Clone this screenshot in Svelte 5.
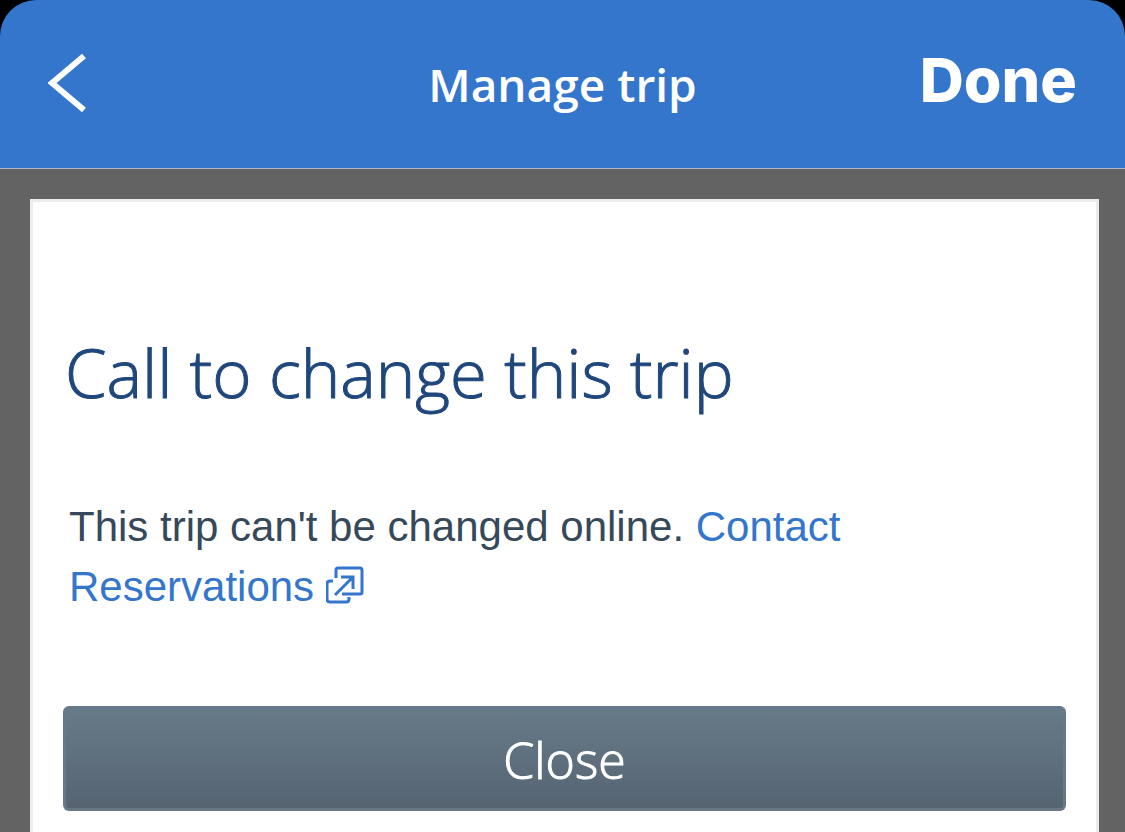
<script>
	let open = true;
	function close() {
		open = false;
	}
</script>

<header>
	<button class="back" aria-label="Back">
		<svg width="40" height="60" viewBox="0 0 40 60" fill="none" stroke="#fff" stroke-width="6">
			<path d="M36 3 L4 30 L36 57" />
		</svg>
	</button>
	<h1>Manage trip</h1>
	<button class="done">Done</button>
</header>

<main>
	{#if open}
		<section class="card">
			<h2>Call to change this trip</h2>
			<p>
				This trip can't be changed online.
				<a href="#reservations">Contact Reservations
					<svg width="38" height="38" viewBox="0 0 38 38" fill="none" stroke="currentColor" stroke-width="3" aria-hidden="true">
						<path d="M10 12 V4 Q10 2 12 2 H34 Q36 2 36 4 V26 Q36 28 34 28 H16" />
						<path d="M7 15 H4 Q1 15 1 18 V33 Q1 36 4 36 H20 Q23 36 23 33 V31" />
						<path d="M9 29 L27 11 M15 11 H27 V23" />
					</svg>
				</a>
			</p>
			<button class="close" on:click={close}>Close</button>
		</section>
	{/if}
</main>

<style>
	:global(body) {
		margin: 0;
		background: #000;
	}

	:global(html) {
		background: #000;
	}

	button {
		border: none;
		background: none;
		padding: 0;
		color: #fff;
		cursor: pointer;
	}

	header {
		display: grid;
		grid-template-columns: 1fr auto 1fr;
		align-items: baseline;
		box-sizing: border-box;
		height: 169px;
		padding: 44px 48px 46px;
		background: #3476cc;
		border-bottom: 1px solid #a9b8cc;
		border-radius: 36px 36px 0 0;
	}

	.back {
		align-self: center;
		justify-self: start;
	}

	.back svg {
		display: block;
	}

	h1 {
		margin: 0;
		color: #fff;
		font: 600 46px/68px "Open Sans", "Noto Sans", sans-serif;
	}

	.done {
		justify-self: end;
		font: 800 61px/72px Inter, sans-serif;
	}

	main {
		box-sizing: border-box;
		min-height: calc(100vh - 169px);
		padding: 30px 26px 0 30px;
		background: #636363;
	}

	.card {
		box-sizing: border-box;
		min-height: calc(100vh - 199px);
		padding: 120px 30px 20px;
		background: #fff;
		border: 3px solid #ebecec;
		border-bottom: none;
	}

	h2 {
		margin: 0;
		padding: 0 2px;
		color: #20477c;
		font: 300 67px/100px "Open Sans", "Noto Sans", sans-serif;
		-webkit-text-stroke: 1px currentColor;
	}

	p {
		margin: 75px 0 89px;
		padding: 0 6px;
		color: #36495a;
		font: 42px/60px "Liberation Sans", Arial, sans-serif;
	}

	a {
		color: #3476cc;
		text-decoration: none;
	}

	a svg {
		vertical-align: -3px;
	}

	.close {
		display: block;
		width: 100%;
		height: 105px;
		padding-top: 2px;
		border: 3px solid #687886;
		border-top-color: #667888;
		border-radius: 6px;
		background: linear-gradient(#677a88, #566472);
		font: 300 50px/70px "Open Sans", "Noto Sans", sans-serif;
		-webkit-text-stroke: 1px currentColor;
	}
</style>
